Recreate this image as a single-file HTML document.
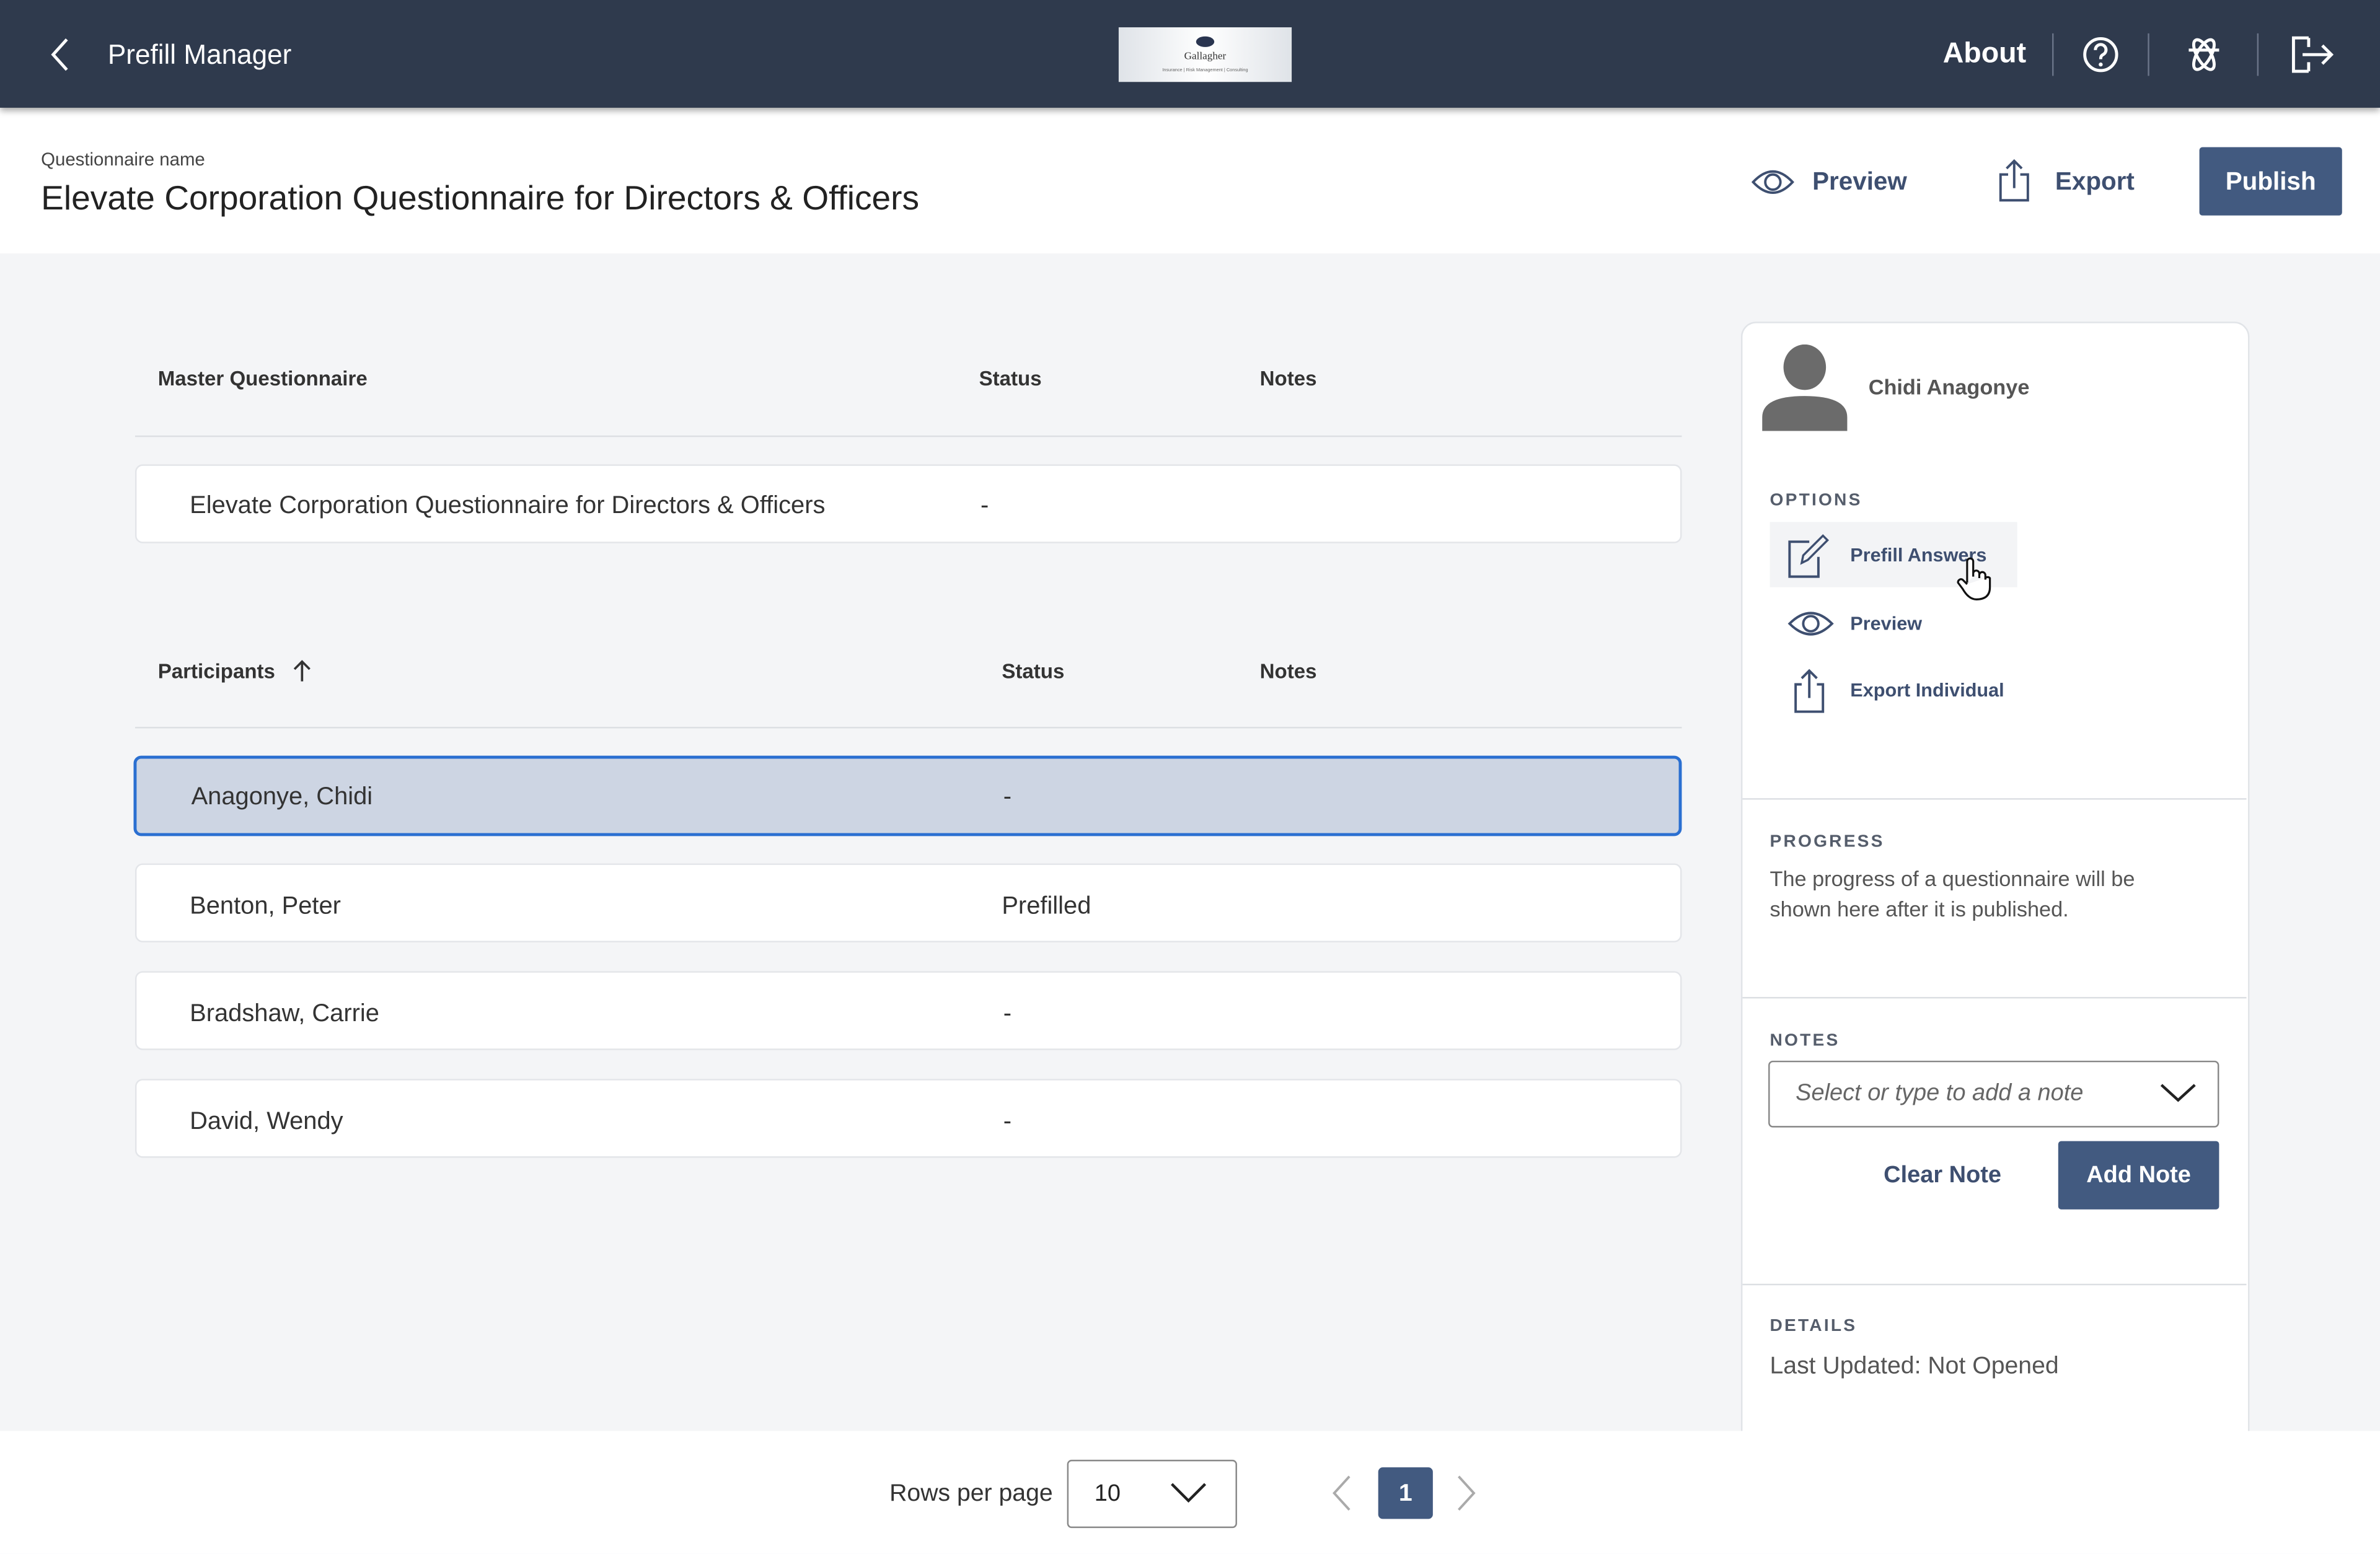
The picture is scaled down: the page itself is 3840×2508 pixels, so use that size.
<!DOCTYPE html>
<html><head><meta charset="utf-8">
<style>
html,body{margin:0;padding:0;width:3840px;height:2507px;overflow:hidden;background:#f4f5f7}
#w{position:absolute;left:0;top:0;width:1568px;height:1024px;transform:scale(2.44898);transform-origin:0 0;font-family:"Liberation Sans",sans-serif;color:#333}
.a{position:absolute}
.hdr{left:0;top:0;width:1568px;height:71px;background:#2f3a4d;box-shadow:0 2px 4px rgba(0,0,0,.35)}
.band{left:0;top:71px;width:1568px;height:96px;background:#fff}
.row{position:absolute;left:89px;width:1017px;height:50px;background:#fff;border:1px solid #e3e5e9;border-radius:5px}
.row span{position:absolute;top:16px;font-size:16.3px;color:#333}
.th{font-size:13.5px;font-weight:bold;color:#333}
.line{height:1px;background:#dcdfe3}
.lbl{font-size:11.5px;letter-spacing:1.3px;font-weight:bold;color:#555d6b}
.opt{font-size:12.5px;font-weight:bold;color:#3e4f70}
.btn{background:#425a80;color:#fff;font-weight:bold;text-align:center;border-radius:2px}
</style></head><body><div id="w">
<div class="a band"></div>
<div class="a hdr">
 <svg class="a" style="left:30px;top:24px" width="20" height="24" viewBox="0 0 20 24"><path d="M14 2 L5 12 L14 22" fill="none" stroke="#fff" stroke-width="2"/></svg>
 <div class="a" style="left:71px;top:26px;font-size:18px;color:#fff">Prefill Manager</div>
 <div class="a" style="left:737px;top:18px;width:114px;height:36px;background:linear-gradient(90deg,#dfe3e8,#fff 50%,#dfe3e8)">
   <div class="a" style="left:51px;top:6px;width:12px;height:7px;border-radius:50%;background:#2a3550"></div>
   <div class="a" style="left:0;top:15px;width:114px;text-align:center;font-size:7px;color:#333;font-family:'Liberation Serif',serif">Gallagher</div>
   <div class="a" style="left:0;top:26px;width:114px;text-align:center;font-size:3px;color:#666">Insurance | Risk Management | Consulting</div>
 </div>
 <div class="a" style="left:1280px;top:25px;font-size:19px;font-weight:bold;color:#fff">About</div>
 <div class="a" style="left:1352px;top:22px;width:1px;height:28px;background:#6a7488"></div>
 <div class="a" style="left:1415px;top:22px;width:1px;height:28px;background:#6a7488"></div>
 <div class="a" style="left:1487px;top:22px;width:1px;height:28px;background:#6a7488"></div>
 <svg class="a" style="left:1371px;top:23px" width="26" height="26" viewBox="0 0 26 26"><circle cx="13" cy="13" r="10.5" fill="none" stroke="#fff" stroke-width="2"/><path d="M9.5 10 a3.5 3.5 0 1 1 5 3 c-1.3.7-1.5 1.5-1.5 3" fill="none" stroke="#fff" stroke-width="2"/><circle cx="13" cy="19.5" r="1.3" fill="#fff"/></svg>
 <svg class="a" style="left:1438px;top:22px" width="28" height="28" viewBox="0 0 28 28"><ellipse cx="14" cy="14" rx="11" ry="4.5" transform="rotate(60 14 14)" fill="none" stroke="#fff" stroke-width="2"/><ellipse cx="14" cy="14" rx="11" ry="4.5" transform="rotate(-60 14 14)" fill="none" stroke="#fff" stroke-width="2"/><path d="M4 11 L24 11" stroke="#fff" stroke-width="2"/></svg>
 <svg class="a" style="left:1508px;top:22px" width="32" height="28" viewBox="0 0 32 28"><path d="M13 3 H3 V25 H13 M13 3 V9 M13 25 V19" fill="none" stroke="#fff" stroke-width="2"/><path d="M9 14 H28 M22 8 L28 14 L22 20" fill="none" stroke="#fff" stroke-width="2"/></svg>
</div>

<div class="a" style="left:27px;top:98px;font-size:12px;color:#444">Questionnaire name</div>
<div class="a" style="left:27px;top:118px;font-size:22.5px;color:#222">Elevate Corporation Questionnaire for Directors &amp; Officers</div>

<svg class="a" style="left:1153px;top:109px" width="30" height="22" viewBox="0 0 30 22"><path d="M2 11 Q15 -3 28 11 Q15 25 2 11Z" fill="none" stroke="#3e4f70" stroke-width="1.6"/><circle cx="15" cy="11" r="5" fill="none" stroke="#3e4f70" stroke-width="1.6"/></svg>
<div class="a" style="left:1194px;top:111px;font-size:16.5px;font-weight:bold;color:#3e4f70">Preview</div>
<svg class="a" style="left:1316px;top:104px" width="22" height="30" viewBox="0 0 22 30"><path d="M7 11 H2 V28 H20 V11 H15 M11 2 V20 M6 7 L11 2 L16 7" fill="none" stroke="#3e4f70" stroke-width="1.6"/></svg>
<div class="a" style="left:1354px;top:111px;font-size:16.5px;font-weight:bold;color:#3e4f70">Export</div>
<div class="a btn" style="left:1449px;top:97px;width:94px;height:45px;line-height:46px;font-size:16.5px">Publish</div>

<div class="a th" style="left:104px;top:242px">Master Questionnaire</div>
<div class="a th" style="left:645px;top:242px">Status</div>
<div class="a th" style="left:830px;top:242px">Notes</div>
<div class="a line" style="left:89px;top:287px;width:1019px"></div>
<div class="row" style="top:306px"><span style="left:35px;top:17px">Elevate Corporation Questionnaire for Directors &amp; Officers</span><span style="left:556px;top:17px">-</span></div>

<div class="a th" style="left:104px;top:435px">Participants</div>
<svg class="a" style="left:192px;top:434px" width="14" height="16" viewBox="0 0 14 16"><path d="M7 15 V2 M2 7 L7 2 L12 7" fill="none" stroke="#333" stroke-width="1.5"/></svg>
<div class="a th" style="left:660px;top:435px">Status</div>
<div class="a th" style="left:830px;top:435px">Notes</div>
<div class="a line" style="left:89px;top:479px;width:1019px"></div>
<div class="row" style="top:498px;left:88px;background:#cdd5e3;border:2px solid #2a6fd1;height:49px;width:1016px"><span style="left:36px;top:16px">Anagonye, Chidi</span><span style="left:571px;top:16px">-</span></div>
<div class="row" style="top:569px"><span style="left:35px;top:18px">Benton, Peter</span><span style="left:570px;top:18px">Prefilled</span></div>
<div class="row" style="top:640px"><span style="left:35px;top:18px">Bradshaw, Carrie</span><span style="left:571px;top:18px">-</span></div>
<div class="row" style="top:711px"><span style="left:35px;top:18px">David, Wendy</span><span style="left:571px;top:18px">-</span></div>

<div class="a" style="left:1147px;top:212px;width:333px;height:760px;background:#fff;border:1px solid #e1e4e8;border-radius:10px"></div>
<svg class="a" style="left:1160px;top:227px" width="60" height="58" viewBox="0 0 60 58"><ellipse cx="29" cy="15" rx="14" ry="15" fill="#6b6b6b"/><path d="M1 57 V48 Q1 34 29 34 Q57 34 57 48 V57Z" fill="#6b6b6b"/></svg>
<div class="a" style="left:1231px;top:247px;font-size:14px;font-weight:bold;color:#555">Chidi Anagonye</div>
<div class="a lbl" style="left:1166px;top:324px">OPTIONS</div>
<div class="a" style="left:1166px;top:344px;width:163px;height:43px;background:#f3f4f6"></div>
<svg class="a" style="left:1176px;top:352px" width="32" height="30" viewBox="0 0 32 30"><path d="M16 5 H3 V28 H22 V15" fill="none" stroke="#3e4f70" stroke-width="1.6"/><path d="M11 19 L12 14 L25 1 L28 4 L15 17Z" fill="none" stroke="#3e4f70" stroke-width="1.4"/></svg>
<div class="a opt" style="left:1219px;top:359px">Prefill Answers</div>
<svg class="a" style="left:1288px;top:366px" width="26" height="30" viewBox="0 0 26 30"><path d="M8 18 V4 a2 2 0 0 1 4 0 V14 M12 12 a2 2 0 0 1 4 0 V15 M16 13 a2 2 0 0 1 4 0 V16 M20 15 a2 2 0 0 1 3 0 V21 Q23 29 14 29 Q9 29 5 22 L2 18 a2 2 0 0 1 3-2 L8 19" fill="#fff" stroke="#111" stroke-width="1.3"/></svg>
<svg class="a" style="left:1177px;top:400px" width="32" height="22" viewBox="0 0 32 22"><path d="M2 11 Q16 -3 30 11 Q16 25 2 11Z" fill="none" stroke="#3e4f70" stroke-width="1.6"/><circle cx="16" cy="11" r="5" fill="none" stroke="#3e4f70" stroke-width="1.6"/></svg>
<div class="a opt" style="left:1219px;top:404px">Preview</div>
<svg class="a" style="left:1180px;top:440px" width="24" height="30" viewBox="0 0 24 30"><path d="M7 11 H3 V29 H21 V11 H17 M12 2 V20 M7 7 L12 2 L17 7" fill="none" stroke="#3e4f70" stroke-width="1.6"/></svg>
<div class="a opt" style="left:1219px;top:448px">Export Individual</div>
<div class="a line" style="left:1148px;top:526px;width:332px"></div>
<div class="a lbl" style="left:1166px;top:549px">PROGRESS</div>
<div class="a" style="left:1166px;top:569px;font-size:14px;line-height:20px;color:#555;width:260px">The progress of a questionnaire will be shown here after it is published.</div>
<div class="a line" style="left:1148px;top:657px;width:332px"></div>
<div class="a lbl" style="left:1166px;top:680px">NOTES</div>
<div class="a" style="left:1165px;top:699px;width:295px;height:42px;border:1px solid #888;border-radius:3px;background:#fff"></div>
<div class="a" style="left:1183px;top:712px;font-size:15.5px;font-style:italic;color:#666">Select or type to add a note</div>
<svg class="a" style="left:1422px;top:712px" width="26" height="16" viewBox="0 0 26 16"><path d="M2 3 L13 13 L24 3" fill="none" stroke="#222" stroke-width="1.8"/></svg>
<div class="a" style="left:1241px;top:766px;font-size:15.5px;font-weight:bold;color:#3e4f70">Clear Note</div>
<div class="a btn" style="left:1356px;top:752px;width:106px;height:45px;line-height:46px;font-size:15.5px">Add Note</div>
<div class="a line" style="left:1148px;top:846px;width:332px"></div>
<div class="a lbl" style="left:1166px;top:868px">DETAILS</div>
<div class="a" style="left:1166px;top:892px;font-size:16px;color:#555">Last Updated: Not Opened</div>

<div class="a" style="left:0;top:943px;width:1568px;height:81px;background:#fff"></div>
<div class="a" style="left:586px;top:976px;font-size:16px;color:#333">Rows per page</div>
<div class="a" style="left:703px;top:962px;width:110px;height:43px;border:1px solid #888;border-radius:3px;background:#fff"></div>
<div class="a" style="left:721px;top:976px;font-size:15.5px;color:#222">10</div>
<svg class="a" style="left:770px;top:975px" width="26" height="18" viewBox="0 0 26 18"><path d="M2 3 L13 14 L24 3" fill="none" stroke="#222" stroke-width="1.8"/></svg>
<svg class="a" style="left:876px;top:971px" width="16" height="26" viewBox="0 0 16 26"><path d="M13 2 L3 13 L13 24" fill="none" stroke="#aaa" stroke-width="1.6"/></svg>
<div class="a btn" style="left:908px;top:967px;width:36px;height:34px;line-height:35px;font-size:16px;border-radius:3px">1</div>
<svg class="a" style="left:958px;top:971px" width="16" height="26" viewBox="0 0 16 26"><path d="M3 2 L13 13 L3 24" fill="none" stroke="#aaa" stroke-width="1.6"/></svg>
</div></body></html>
